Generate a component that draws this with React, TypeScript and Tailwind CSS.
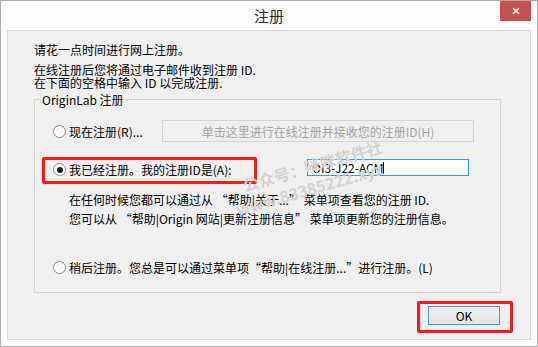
import React from 'react';
import { X } from 'lucide-react';

const font = { fontFamily: '"Noto Sans CJK SC", "Noto Sans", sans-serif' };

const Radio: React.FC<{ checked?: boolean }> = ({ checked }) => (
  <span className="flex-none w-[13px] h-[13px] rounded-full border border-[#8c8c8c] bg-gradient-to-b from-[#f4f4f4] to-[#ffffff] flex items-center justify-center">
    {checked && <span className="w-[6px] h-[6px] rounded-full bg-[#1e1e1e]" />}
  </span>
);

export default function App() {
  return (
    <div
      style={font}
      className="w-[538px] h-[347px] bg-[#fbfbfb] border border-[#adadad] flex flex-col text-[12px] leading-[13px] text-black"
    >
      {/* Title bar */}
      <div className="h-[29px] grid grid-cols-[1fr_auto_1fr]">
        <div />
        <div className="pt-[6px] text-[15px] leading-[18px] text-[#2b2b2b]">注册</div>
        <div className="flex justify-end items-start pr-[6px]">
          <button className="w-[31px] h-[20px] bg-[#c75050] flex items-center justify-center">
            <X className="w-[10px] h-[10px] text-white" strokeWidth={3.5} />
          </button>
        </div>
      </div>

      {/* Client area */}
      <div className="relative mx-[6px] mb-[6px] flex-1 border border-[#d9d9d9] bg-[#f0f0f0]">
        <div className="pl-[26px] pt-[12px]">
          <p>请花一点时间进行网上注册。</p>
          <p className="mt-[7px]">在线注册后您将通过电子邮件收到注册 ID.</p>
          <p>在下面的空格中输入 ID 以完成注册.</p>
        </div>

        {/* Group box */}
        <div className="ml-[26px] mt-[10px] w-[467px] h-[194px] border border-[#d5d5d5] flex flex-col">
          <span className="-mt-[7px] ml-[6px] self-start bg-[#f0f0f0] px-[1px]">OriginLab 注册</span>

          <div className="mt-[14px] flex items-center pl-[18px] h-[22px]">
            <div className="w-[109px] flex items-center gap-[3px]">
              <Radio />
              <span>现在注册(R)...</span>
            </div>
            <div className="w-[312px] h-[22px] border border-[#d4d4d4] bg-[#efefef] flex items-center justify-center text-[#a3a3a3]">
              单击这里进行在线注册并接收您的注册ID(H)
            </div>
          </div>

          <div className="mt-[15px] flex items-start pl-[7px]">
            <div className="w-[215px] h-[27px] border-[3px] border-[#f61c1c] rounded-[2px] flex items-center pl-[8px] pb-[2px] gap-[3px]">
              <Radio checked />
              <span>我已经注册。我的注册ID是(A):</span>
            </div>
            <div className="ml-[50px] mt-[2px] w-[162px] h-[17px] border border-[#3d95e0] bg-white flex items-center pl-[4px] text-[12px]">
              <span>OI3-J22-ACM</span>
              <span className="w-[1px] h-[12px] bg-black" />
            </div>
          </div>

          <div className="mt-[6px] pl-[34px] leading-[19px]">
            <p>在任何时候您都可以通过从 “帮助|关于...” 菜单项查看您的注册 ID.</p>
            <p>您可以从 “帮助|Origin 网站|更新注册信息” 菜单项更新您的注册信息。</p>
          </div>

          <div className="mt-[33px] flex items-center pl-[18px] gap-[3px]">
            <Radio />
            <span>稍后注册。您总是可以通过菜单项“帮助|在线注册...”进行注册。(L)</span>
          </div>
        </div>

        {/* OK button */}
        <div className="mt-[8px] flex justify-end pr-[17px]">
          <div className="w-[96px] h-[32px] border-[3px] border-[#f61c1c] rounded-[2px] pl-[8px] pt-[2px]">
            <button className="w-[72px] h-[19px] border border-[#3c9ae6] bg-gradient-to-b from-[#f2f2f2] to-[#e3e3e3] flex items-center justify-center text-[12px]">
              OK
            </button>
          </div>
        </div>

        {/* Watermark */}
        <svg className="absolute left-[220px] top-[100px] pointer-events-none" width="240" height="120">
          <g fill="#d3d3d3" fontSize="16" fontWeight="bold" fontFamily='"Noto Sans CJK SC", sans-serif'>
            <text x="17" y="61" transform="rotate(-16 17 61)">公众号：咪咪软件社</text>
            <text x="10" y="85" transform="rotate(-16 10 85)">www.83385222.xyz</text>
          </g>
        </svg>
      </div>
    </div>
  );
}
